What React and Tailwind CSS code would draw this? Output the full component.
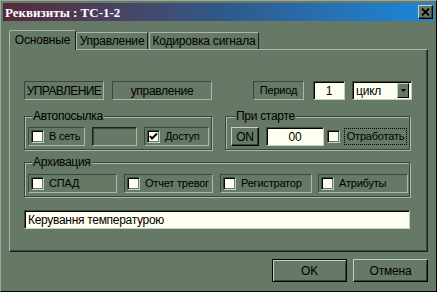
import React from "react";

const font = { fontFamily: '"Liberation Sans", Arial, sans-serif' };

function CheckBox({ checked }) {
  return (
    <div className="w-[13px] h-[13px] shrink-0 bg-[#fffff0] border border-t-[#3c473c] border-l-[#3c473c] border-r-[#c4d0c4] border-b-[#c4d0c4] shadow-[inset_1px_1px_0_#000,inset_-1px_-1px_0_#667866] flex items-center justify-center">
      {checked && (
        <svg width="9" height="9" viewBox="0 0 9 9">
          <path d="M1 4 L3 6.5 L8 1.5" stroke="#000" strokeWidth="2" fill="none" />
        </svg>
      )}
    </div>
  );
}

function CheckFrame({ w, label, checked, extra = "" }) {
  return (
    <div
      className={`h-[19px] shrink-0 flex items-center pl-[2px] border border-t-[#3c473c] border-l-[#3c473c] border-r-[#a9b9a9] border-b-[#a9b9a9] ${extra}`}
      style={{ width: w }}
    >
      <CheckBox checked={checked} />
      <span className="ml-[5px] leading-none text-black whitespace-nowrap">{label}</span>
    </div>
  );
}

export default function App() {
  return (
    <div
      className="w-[437px] h-[292px] bg-[#667866] border border-t-[#9aaa9a] border-l-[#9aaa9a] border-r-black border-b-black p-[2px] flex flex-col overflow-hidden whitespace-nowrap text-[11px] tracking-[-0.2px]"
      style={font}
    >
      {/* Title bar */}
      <div className="h-[18px] shrink-0 bg-linear-to-r from-[#55283a] via-[#2e5888] to-[#1488dc] flex items-center pl-[2px] pr-[1px]">
        <span
          className="text-white font-bold text-[13px] leading-none tracking-normal"
          style={{ fontFamily: '"Liberation Serif", "Times New Roman", serif' }}
        >
          Реквизиты : ТС-1-2
        </span>
        <div className="ml-auto w-[15px] h-[14px] bg-[#667866] border border-t-[#c4d0c4] border-l-[#c4d0c4] border-r-black border-b-black shadow-[inset_-1px_-1px_0_#3c473c] flex items-center justify-center">
          <svg width="9" height="8" viewBox="0 0 9 8">
            <path d="M1 0.5 L8 7.5 M8 0.5 L1 7.5" stroke="#000" strokeWidth="1.8" />
          </svg>
        </div>
      </div>

      {/* Tabs */}
      <div className="ml-[6px] mt-[9px] flex items-end h-[19px] text-[12px] tracking-[-0.2px] text-black">
        <div className="relative z-10 -mb-px h-[20px] w-[67px] bg-[#667866] border border-b-0 border-t-[#a9b9a9] border-l-[#a9b9a9] border-r-[#1a1f1a] rounded-t-[2px] flex items-center justify-center pb-[1px]">
          Основные
        </div>
        <div className="h-[17px] w-[72px] bg-[#667866] border border-b-0 border-t-[#a9b9a9] border-l-[#a9b9a9] border-r-[#1a1f1a] rounded-t-[2px] flex items-center justify-center">
          Управление
        </div>
        <div className="ml-px h-[17px] w-[110px] bg-[#667866] border border-b-0 border-t-[#a9b9a9] border-l-[#a9b9a9] border-r-[#1a1f1a] rounded-t-[2px] flex items-center justify-center">
          Кодировка сигнала
        </div>
      </div>

      {/* Panel */}
      <div className="ml-[6px] w-[419px] h-[203px] border border-t-[#a9b9a9] border-l-[#a9b9a9] border-r-[#1a1f1a] border-b-[#1a1f1a] shadow-[inset_-1px_-1px_0_#3c473c] pl-[14px] pt-[31px] text-black">
        {/* Row 1 */}
        <div className="flex h-[19px]">
          <div className="w-[80px] border border-t-[#3c473c] border-l-[#3c473c] border-r-[#a9b9a9] border-b-[#a9b9a9] flex items-center justify-center leading-none text-[12px] tracking-[-0.6px]">
            УПРАВЛЕНИЕ
          </div>
          <div className="ml-[8px] w-[100px] border border-t-[#3c473c] border-l-[#3c473c] border-r-[#a9b9a9] border-b-[#a9b9a9] flex items-center justify-center leading-none text-[12px] tracking-[-0.3px]">
            управление
          </div>
          <div className="ml-[41px] w-[51px] border border-t-[#3c473c] border-l-[#3c473c] border-r-[#a9b9a9] border-b-[#a9b9a9] flex items-center justify-center leading-none">
            Период
          </div>
          <div className="ml-[9px] w-[32px] bg-[#fffff0] border border-t-[#3c473c] border-l-[#3c473c] border-r-[#c4d0c4] border-b-[#c4d0c4] shadow-[inset_1px_1px_0_#000] flex items-center justify-center leading-none text-[12px]">
            1
          </div>
          <div className="ml-[7px] w-[60px] bg-[#fffff0] border border-t-[#3c473c] border-l-[#3c473c] border-r-[#c4d0c4] border-b-[#c4d0c4] shadow-[inset_1px_1px_0_#000] flex items-center pl-[3px] pr-[2px] leading-none text-[12px]">
            <span>цикл</span>
            <div className="ml-auto w-[12px] h-[15px] bg-[#667866] border border-t-[#c4d0c4] border-l-[#c4d0c4] border-r-black border-b-black flex items-center justify-center">
              <svg width="5" height="3" viewBox="0 0 5 3">
                <path d="M0 0 H5 L2.5 3 Z" fill="#000" />
              </svg>
            </div>
          </div>
        </div>

        {/* Row 2: groups */}
        <div className="flex mt-[16px]">
          <div className="relative w-[188px] h-[34px] border border-[#3c473c] shadow-[inset_1px_1px_0_#a9b9a9,1px_1px_0_#a9b9a9] pl-[3px] pt-[10px]">
            <span className="absolute -top-[7px] left-[7px] px-[1px] bg-[#667866] leading-none text-[12px] tracking-[-0.3px]">Автопосылка</span>
            <div className="flex">
              <CheckFrame w={57} label="В сеть" />
              <div className="ml-[7px] w-[45px] h-[19px] shrink-0 border border-t-[#1a1f1a] border-l-[#1a1f1a] border-r-[#a9b9a9] border-b-[#a9b9a9] shadow-[inset_1px_1px_0_#3c473c]" />
              <CheckFrame w={65} label="Доступ" checked extra="ml-[7px]" />
            </div>
          </div>
          <div className="relative ml-[13px] w-[185px] h-[34px] border border-[#3c473c] shadow-[inset_1px_1px_0_#a9b9a9,1px_1px_0_#a9b9a9] pl-[5px] pt-[10px]">
            <span className="absolute -top-[7px] left-[9px] px-[1px] bg-[#667866] leading-none text-[12px] tracking-[-0.3px]">При старте</span>
            <div className="flex items-center">
              <div className="w-[28px] h-[19px] shrink-0 border border-t-[#c4d0c4] border-l-[#c4d0c4] border-r-black border-b-black shadow-[inset_-1px_-1px_0_#3c473c] flex items-center justify-center leading-none text-[12px]">
                ON
              </div>
              <div className="ml-[7px] w-[58px] h-[19px] shrink-0 bg-[#fffff0] border border-t-[#3c473c] border-l-[#3c473c] border-r-[#c4d0c4] border-b-[#c4d0c4] shadow-[inset_1px_1px_0_#000] flex items-center justify-center leading-none text-[12px]">
                00
              </div>
              <div className="ml-[3px]">
                <CheckBox />
              </div>
              <div className="ml-[4px] h-[17px] w-[63px] shrink-0 border border-dotted border-black flex items-center justify-center leading-none">
                Отработать
              </div>
            </div>
          </div>
        </div>

        {/* Row 3: Архивация */}
        <div className="relative mt-[12px] w-[386px] h-[35px] border border-[#3c473c] shadow-[inset_1px_1px_0_#a9b9a9,1px_1px_0_#a9b9a9] pl-[3px] pt-[11px]">
          <span className="absolute -top-[7px] left-[7px] px-[1px] bg-[#667866] leading-none text-[12px] tracking-[-0.3px]">Архивация</span>
          <div className="flex">
            <CheckFrame w={89} label="СПАД" />
            <CheckFrame w={89} label="Отчет тревог" extra="ml-[7px]" />
            <CheckFrame w={92} label="Регистратор" extra="ml-[7px]" />
            <CheckFrame w={90} label="Атрибуты" extra="ml-[6px]" />
          </div>
        </div>

        {/* Text input */}
        <div className="mt-[13px] w-[386px] h-[19px] bg-[#fffff0] border border-t-[#3c473c] border-l-[#3c473c] border-r-[#c4d0c4] border-b-[#c4d0c4] shadow-[inset_1px_1px_0_#000] flex items-center pl-[3px] leading-none text-[12px] tracking-[-0.3px]">
          Керування температурою
        </div>
      </div>

      {/* Buttons */}
      <div className="mt-[7px] flex justify-end w-[425px] text-[12px] text-black">
        <div className="w-[75px] h-[23px] border border-black shadow-[inset_1px_1px_0_#c4d0c4,inset_-1px_-1px_0_#3c473c] flex items-center justify-center leading-none">
          OK
        </div>
        <div className="ml-[6px] w-[75px] h-[23px] border border-t-[#c4d0c4] border-l-[#c4d0c4] border-r-black border-b-black shadow-[inset_-1px_-1px_0_#3c473c] flex items-center justify-center leading-none">
          Отмена
        </div>
      </div>
    </div>
  );
}
